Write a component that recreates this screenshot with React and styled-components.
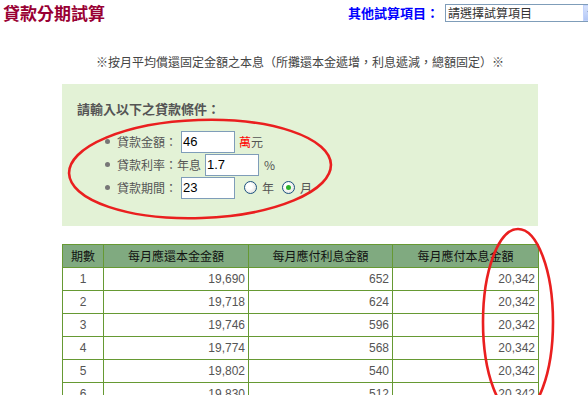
import React from "react";
import styled, { createGlobalStyle } from "styled-components";

const Global = createGlobalStyle`
  html, body { margin: 0; padding: 0; overflow: hidden; background: #fff; }
  * { box-sizing: border-box; }
`;

const Page = styled.div`
  position: relative;
  width: 588px;
  height: 395px;
  overflow: hidden;
  background: #fff;
  font-family: "Liberation Sans", "Noto Sans CJK TC", sans-serif;
`;

const Header = styled.div`
  display: flex;
  align-items: center;
  justify-content: space-between;
  width: 600px;
  height: 25px;
  padding-left: 3px;
`;

const Title = styled.h1`
  margin: 0;
  font-size: 17px;
  line-height: 20px;
  font-weight: bold;
  color: #990033;
  font-family: "Noto Sans CJK TC", sans-serif;
`;

const Picker = styled.div`
  display: flex;
  align-items: center;
  gap: 6px;
`;

const PickerLabel = styled.span`
  font-size: 13px;
  font-weight: bold;
  color: #0000ff;
  font-family: "Noto Sans CJK TC", sans-serif;
  line-height: 16px;
`;

const FakeSelect = styled.div`
  position: relative;
  width: 155px;
  height: 18px;
  border: 1px solid #7f9db9;
  background: #fff;
  font-size: 12px;
  line-height: 16px;
  color: #333;
  padding-left: 2px;
  font-family: "Noto Sans CJK TC", sans-serif;
`;

const SelectButton = styled.span`
  position: absolute;
  top: 0;
  right: 0;
  width: 16px;
  height: 16px;
  background: linear-gradient(#d6e2fc, #b4c8f6);
  border: 1px solid #c3d3fd;
  display: flex;
  align-items: center;
  justify-content: center;
`;

const Content = styled.div`
  margin-left: 62px;
  width: 476px;
`;

const Note = styled.p`
  margin: 0;
  padding-top: 29px;
  text-align: center;
  font-size: 12px;
  line-height: 16px;
  color: #444;
  font-family: "Noto Sans CJK TC", sans-serif;
`;

const FormBox = styled.div`
  margin-top: 14px;
  height: 142px;
  background: #e3f2d6;
  padding: 17px 15px 0;
`;

const FormHeading = styled.div`
  font-size: 13px;
  line-height: 16px;
  font-weight: bold;
  color: #555;
  font-family: "Noto Sans CJK TC", sans-serif;
`;

const FieldList = styled.ul`
  list-style: none;
  margin: 13px 0 0;
  padding: 0 0 0 28px;
`;

const FieldRow = styled.li`
  display: flex;
  align-items: center;
  height: 23px;
  font-size: 12px;
  color: #555;
  font-family: "Noto Sans CJK TC", sans-serif;
`;

const Bullet = styled.span`
  width: 5px;
  height: 5px;
  border-radius: 50%;
  background: #777;
  margin-right: 7px;
  flex: none;
`;

const Label = styled.span`
  margin-right: 4px;
  white-space: nowrap;
`;

const TextBox = styled.span`
  display: inline-flex;
  align-items: center;
  width: 54px;
  height: 22px;
  border: 1px solid #7f9db9;
  background: #fff;
  padding-left: 1px;
  font-family: "Liberation Sans", sans-serif;
  font-size: 13px;
  color: #000;
`;

const Unit = styled.span`
  margin-left: ${(p) => p.$gap ?? 4}px;
  color: ${(p) => (p.$red ? "#ff0000" : "#555")};
`;

const Radio = styled.span`
  width: 13px;
  height: 13px;
  margin-left: ${(p) => p.$gap}px;
  border-radius: 50%;
  border: 1px solid #1c5180;
  background: radial-gradient(circle at 40% 40%, #ffffff 30%, #d5d5cf 100%);
  display: flex;
  align-items: center;
  justify-content: center;
  flex: none;
  &::after {
    content: "";
    width: 5px;
    height: 5px;
    border-radius: 50%;
    background: ${(p) => (p.$checked ? "#2bb32b" : "transparent")};
  }
`;

const Table = styled.table`
  margin-top: 18px;
  width: 476px;
  border-collapse: collapse;
  table-layout: fixed;
  font-size: 12px;
`;

const Th = styled.th`
  height: 23px;
  padding: 0;
  background: #80aa80;
  border: 1px solid #669933;
  font-weight: normal;
  color: #111;
  font-family: "Noto Sans CJK TC", sans-serif;
  line-height: 16px;
`;

const Td = styled.td`
  height: 23px;
  padding: 0 ${(p) => (p.$center ? 0 : 3)}px 0 0;
  border: 1px solid #669933;
  text-align: ${(p) => (p.$center ? "center" : "right")};
  color: #555;
  font-family: "Liberation Sans", sans-serif;
  line-height: 16px;
`;

const Overlay = styled.svg`
  position: absolute;
  left: 0;
  top: 0;
  pointer-events: none;
`;

function schedule() {
  const P = 460000;
  const r = 0.017 / 12;
  const n = 23;
  const pay = Math.round((P * r) / (1 - Math.pow(1 + r, -n)));
  let bal = P;
  const rows = [];
  for (let i = 1; i <= 8; i++) {
    const interest = Math.round(bal * r);
    const principal = pay - interest;
    bal -= principal;
    rows.push({ i, principal, interest, pay });
  }
  return rows;
}

const fmt = (v) => v.toLocaleString("en-US");

export default function App() {
  const rows = schedule();
  return (
    <Page>
      <Global />
      <Header>
        <Title>貸款分期試算</Title>
        <Picker>
          <PickerLabel>其他試算項目：</PickerLabel>
          <FakeSelect>
            請選擇試算項目
            <SelectButton>
              <svg width="8" height="6" viewBox="0 0 8 6">
                <path d="M1 1 L4 4 L7 1" fill="none" stroke="#4d6185" strokeWidth="1.6" />
              </svg>
            </SelectButton>
          </FakeSelect>
        </Picker>
      </Header>
      <Content>
        <Note>※按月平均償還固定金額之本息（所攤還本金遞增，利息遞減，總額固定）※</Note>
        <FormBox>
          <FormHeading>請輸入以下之貸款條件：</FormHeading>
          <FieldList>
            <FieldRow>
              <Bullet />
              <Label>貸款金額：</Label>
              <TextBox>46</TextBox>
              <Unit $red>萬</Unit>
              <Unit $gap={0}>元</Unit>
            </FieldRow>
            <FieldRow>
              <Bullet />
              <Label>貸款利率：年息</Label>
              <TextBox>1.7</TextBox>
              <Unit $gap={5}>%</Unit>
            </FieldRow>
            <FieldRow>
              <Bullet />
              <Label>貸款期間：</Label>
              <TextBox>23</TextBox>
              <Radio $gap={9} />
              <Unit $gap={5}>年</Unit>
              <Radio $gap={8} $checked />
              <Unit $gap={5}>月</Unit>
            </FieldRow>
          </FieldList>
        </FormBox>
        <Table>
          <colgroup>
            <col style={{ width: 41 }} />
            <col style={{ width: 145 }} />
            <col style={{ width: 144 }} />
            <col style={{ width: 146 }} />
          </colgroup>
          <thead>
            <tr>
              <Th>期數</Th>
              <Th>每月應還本金金額</Th>
              <Th>每月應付利息金額</Th>
              <Th>每月應付本息金額</Th>
            </tr>
          </thead>
          <tbody>
            {rows.map((row) => (
              <tr key={row.i}>
                <Td $center>{row.i}</Td>
                <Td>{fmt(row.principal)}</Td>
                <Td>{fmt(row.interest)}</Td>
                <Td>{fmt(row.pay)}</Td>
              </tr>
            ))}
          </tbody>
        </Table>
      </Content>
      <Overlay width="588" height="395" viewBox="0 0 588 395">
        <ellipse cx="200" cy="169" rx="131" ry="49" transform="rotate(-2 200 169)" fill="none" stroke="#ea1f1f" strokeWidth="2.6" />
        <ellipse cx="518" cy="322" rx="35" ry="93" fill="none" stroke="#ea1f1f" strokeWidth="2.6" />
      </Overlay>
    </Page>
  );
}
